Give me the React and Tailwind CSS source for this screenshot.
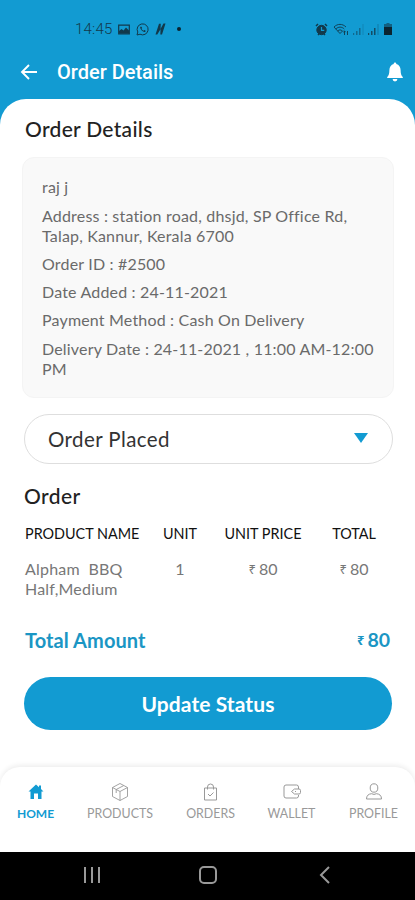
const details = [
  'raj j',
  'Address : station road, dhsjd, SP Office Rd, Talap, Kannur, Kerala 6700',
  'Order ID : #2500',
  'Date Added : 24-11-2021',
  'Payment Method : Cash On Delivery',
  'Delivery Date : 24-11-2021 , 11:00 AM-12:00 PM',
];

const tabs = [
  { label: 'HOME', icon: HomeIcon, width: 'w-[71px]', active: true },
  { label: 'PRODUCTS', icon: BoxIcon, width: 'w-[98px]' },
  { label: 'ORDERS', icon: BagIcon, width: 'w-[83px]' },
  { label: 'WALLET', icon: WalletIcon, width: 'w-[79px]' },
  { label: 'PROFILE', icon: ProfileIcon, width: 'w-[85px]' },
];

export default function App() {
  return (
    <div className="flex h-[900px] w-[415px] flex-col overflow-hidden bg-[#129bd2] font-['Lato',sans-serif]">
      <StatusBar />
      <Header />
      <main className="h-[668px] shrink-0 rounded-t-[26px] bg-white px-6 pt-4">
        <h2 className="pl-px text-[21px] leading-7 font-medium tracking-[0.300px] text-[#222]">Order Details</h2>
        <OrderInfo />
        <button className="mt-4 flex h-[50px] w-[369px] items-center justify-between rounded-full border border-[#dedede] pr-6 pl-[23px] text-[20.500px] tracking-[0.400px] text-[#333]">
          <span>Order Placed</span>
          <svg width="14" height="10" viewBox="0 0 14 10" className="mb-0.5">
            <path d="M0 0h14L7 10z" fill="#129bd2" />
          </svg>
        </button>
        <h2 className="mt-[18px] text-[21px] leading-7 font-medium tracking-[0.400px] text-[#222]">Order</h2>
        <OrderTable />
        <div className="mt-[29px] flex w-[366px] items-center justify-between pl-px text-[20px] leading-6 font-bold text-[#1b96c4]">
          <span className="tracking-[0.080px]">Total Amount</span>
          <div className="text-[19.500px]">
            <Price amount={80} />
          </div>
        </div>
        <button className="mt-[25px] h-[53px] w-[368px] rounded-full bg-[#129bd2] text-[21px] font-bold tracking-[0.080px] text-white">
          Update Status
        </button>
      </main>
      <BottomNav />
      <SystemNav />
    </div>
  );
}

function StatusBar() {
  return (
    <div className="flex h-[46px] shrink-0 items-end justify-between pr-[23px] pb-[9px] pl-[75px] text-[#12394b]">
      <div className="flex h-4 items-center">
        <span className="w-[43px] font-['Roboto',sans-serif] text-[15px] leading-4 font-light tracking-[0.200px]">14:45</span>
        <svg width="12" height="11" viewBox="0 0 12 10" fill="none">
          <path d="M.7.700h10.600v8.600H.7z" stroke="currentColor" strokeWidth="1.200" />
          <path d="M1 9V6.500l2.500-2 2 1.500L8 3l3 3v3z" fill="currentColor" />
        </svg>
        <svg width="13" height="13" viewBox="0 0 13 13" fill="none" className="ml-[6px]" stroke="currentColor">
          <path d="m1 12 .8-3A5.500 5.500 0 1 1 4 11.200z" />
          <path d="M4.300 3.800c-.8 1.500 2.500 5.600 4.500 5.200.9-.2 1-1.200.5-1.500l-1-.5-.8.700C6.400 7.200 5.700 6.300 5.500 5.800l.6-.7-.6-1.400z" fill="currentColor" stroke="none" />
        </svg>
        <svg width="11" height="12" viewBox="0 0 11 12" className="ml-[6px]">
          <path d="M.5 11.500 4 .8h1.800L5.500 6 8.500.5h2L7 11.500H5.300L5.600 6l-3.300 5.500z" fill="currentColor" />
        </svg>
        <span className="ml-[11px] size-[3.500px] rounded-full bg-[#0b2430]" />
      </div>
      <div className="flex h-4 items-center">
        <svg width="13" height="13" viewBox="0 0 13 13" fill="none" stroke="currentColor">
          <circle cx="6.500" cy="7" r="4.700" fill="currentColor" />
          <path d="M1 3l2-2M12 3l-2-2M3 12l1-1M10 12l-1-1" strokeWidth="1.500" />
          <path d="M6.500 4v3.300h2.800" stroke="#129bd2" strokeWidth="1.200" />
        </svg>
        <svg width="16" height="13" viewBox="0 0 15 13" fill="none" stroke="currentColor" strokeWidth=".9" className="ml-[5px]">
          <path d="M.5 4C4 .5 9 .5 12.500 4M2.300 6c2.500-2.500 6-2.500 8.500 0M4.200 8c1.500-1.500 3.200-1.500 4.600 0M.5 4l6 6.500 3-3" />
          <path d="M11 12V8M9.800 9.200 11 8l1.200 1.200M14 8v4" />
        </svg>
        <Signal className="ml-1 opacity-50" />
        <Signal className="ml-1 opacity-80" />
        <svg width="8" height="12" viewBox="0 0 8 12" className="ml-[5px]">
          <path d="M2.500 0h3v1H8v3H0V1h2.500z" fill="#12394b" opacity=".6" />
          <path d="M0 4h8v8H0z" fill="#0b2430" />
        </svg>
      </div>
    </div>
  );
}

function Signal({ className }) {
  return (
    <svg width="11" height="11" viewBox="0 0 11 11" fill="currentColor" className={className}>
      <path d="M0 9h1.200v2H0zM3 7h1.500v4H3zM6 4h1.500v7H6z" />
      <path d="M9.500 0h1v11h-1z" opacity=".4" />
    </svg>
  );
}

function Header() {
  return (
    <header className="flex h-[53px] shrink-0 items-center pr-3 pb-0.5 pl-5 text-white">
      <svg width="18" height="16" viewBox="0 0 18 16" fill="none" stroke="currentColor" strokeWidth="1.900">
        <path d="M17 8H2M9 1 2 8l7 7" />
      </svg>
      <h1 className="ml-[19px] flex-1 font-['Roboto',sans-serif] text-[20px] leading-6 font-medium">Order Details</h1>
      <svg width="16" height="20" viewBox="0 0 16 20" fill="currentColor">
        <path d="M8 .5c.8 0 1.300.6 1.300 1.400C12 2.600 13.600 5 13.600 8c0 4 .8 5.600 2.200 7v1H.2v-1c1.400-1.400 2.200-3 2.200-7 0-3 1.600-5.400 4.300-6.100C6.700 1.100 7.200.5 8 .5zM5.600 17h4.800a2.400 2.400 0 0 1-4.800 0z" />
      </svg>
    </header>
  );
}

function OrderInfo() {
  return (
    <div className="mt-[14px] -ml-[2px] h-[241px] w-[372px] space-y-[8.300px] rounded-xl border border-[#f4f4f4] bg-[#f9f9f9] pt-[19.300px] pr-4 pl-[19px] text-[16px] leading-5 tracking-[0.180px] text-[#6a6a6a]">
      {details.map(line => (
        <p key={line}>{line}</p>
      ))}
    </div>
  );
}

function OrderTable() {
  return (
    <div className="mt-[14px] mb-px grid grid-cols-[119px_72px_94px_88px] pl-px">
      <div className="text-[14.400px] leading-5 whitespace-nowrap text-[#111]">PRODUCT NAME</div>
      <div className="text-center text-[14.400px] leading-5 text-[#111]">UNIT</div>
      <div className="text-center text-[14.400px] leading-5 text-[#111]">UNIT PRICE</div>
      <div className="text-center text-[14.400px] leading-5 text-[#111]">TOTAL</div>
      <div className="mt-[15px] text-[16px] leading-5 tracking-[0.200px] whitespace-pre text-[#777]">{'Alpham  BBQ\nHalf,Medium'}</div>
      <div className="mt-[15px] text-center text-[16px] leading-5 text-[#777]">1</div>
      <div className="mt-[15px] flex items-start justify-center text-[16px] leading-5 text-[#777]"><Price amount={80} /></div>
      <div className="mt-[15px] flex items-start justify-center text-[16px] leading-5 text-[#777]"><Price amount={80} /></div>
    </div>
  );
}

function Price({ amount }) {
  return (
    <span className="flex items-center gap-[3px]">
      <span className="font-['Noto_Sans',sans-serif] text-[13px] leading-4">₹</span>
      <span>{amount}</span>
    </span>
  );
}

function BottomNav() {
  return (
    <nav className="z-10 h-[85px] shrink-0 bg-white">
      <div className="flex h-[85px] rounded-t-[20px] bg-white pt-4 shadow-[0_-2px_5px_rgba(0,0,0,0.07)]">
        {tabs.map(tab => (
          <Tab key={tab.label} {...tab} />
        ))}
      </div>
    </nav>
  );
}

function Tab({ label, icon: Icon, width, active }) {
  return (
    <div className={`${width} flex shrink-0 flex-col items-center ${active ? 'text-[#129bd2]' : 'text-[#999]'}`}>
      <Icon />
      <span className={`mt-[5px] leading-4 ${active ? 'text-[12px] font-bold' : 'text-[12.400px]'}`}>{label}</span>
    </div>
  );
}

function HomeIcon() {
  return (
    <svg width="18" height="18" viewBox="0 0 18 18" fill="currentColor">
      <path d="M9 1.500 1.500 8.500h2V16H7v-5.500h4V16h3.500V8.500h2L14 6.100V2.500h-2v1.800z" />
    </svg>
  );
}

function BoxIcon() {
  return (
    <svg width="18" height="18" viewBox="0 0 18 18" fill="none" stroke="currentColor" strokeLinejoin="round" strokeWidth=".9">
      <path d="m9 .5 7.500 4v9L9 17.500l-7.500-4v-9zM1.500 4.500 9 8.500l7.500-4M9 8.500v9M12.700 2.600 5.200 6.500v3.500M9 .5" />
    </svg>
  );
}

function BagIcon() {
  return (
    <svg width="18" height="18" viewBox="0 0 18 18" fill="none" stroke="currentColor" strokeLinejoin="round">
      <path d="M2.500 5h12v12h-12zM5.500 6.500V4a3 3 0 0 1 6 0v2.500M6 11l2 2 3.500-3.500" />
    </svg>
  );
}

function WalletIcon() {
  return (
    <svg width="18" height="18" viewBox="0 0 18 18" fill="none" stroke="currentColor" strokeLinejoin="round">
      <path d="M15.500 6V4a2 2 0 0 0-2-2H3a2 2 0 0 0-2 2v9a2 2 0 0 0 2 2h10.500a2 2 0 0 0 2-2v-1M16 6h-4.500L8.500 8.500l3 2.500H16A1.500 1.500 0 0 0 17.500 9.500v-2A1.500 1.500 0 0 0 16 6z" />
      <path d="M12 8.500h1" />
    </svg>
  );
}

function ProfileIcon() {
  return (
    <svg width="18" height="18" viewBox="0 0 18 18" fill="none" stroke="currentColor" strokeLinejoin="round">
      <ellipse cx="9" cy="5" rx="3.800" ry="4.200" />
      <path d="M1.500 16c0-3.500 2-5 5-5.300a5 5 0 0 0 5 0c3 .3 5 1.800 5 5.300z" />
    </svg>
  );
}

function SystemNav() {
  return (
    <div className="z-20 flex h-12 shrink-0 items-center bg-black pb-0.5 pl-[83px] text-[#999]">
      <svg width="18" height="18" viewBox="0 0 18 18" fill="none" stroke="currentColor" strokeWidth="2">
        <path d="M2 1v16M9 1v16M16 1v16" />
      </svg>
      <svg width="18" height="18" viewBox="0 0 18 18" fill="none" stroke="currentColor" strokeWidth="2" className="ml-[98px]">
        <rect x="1" y="1" width="16" height="16" rx="4" />
      </svg>
      <svg width="11" height="18" viewBox="0 0 11 18" fill="none" stroke="currentColor" strokeWidth="2" className="ml-[102px]">
        <path d="M10 1 2 9l8 8" />
      </svg>
    </div>
  );
}
